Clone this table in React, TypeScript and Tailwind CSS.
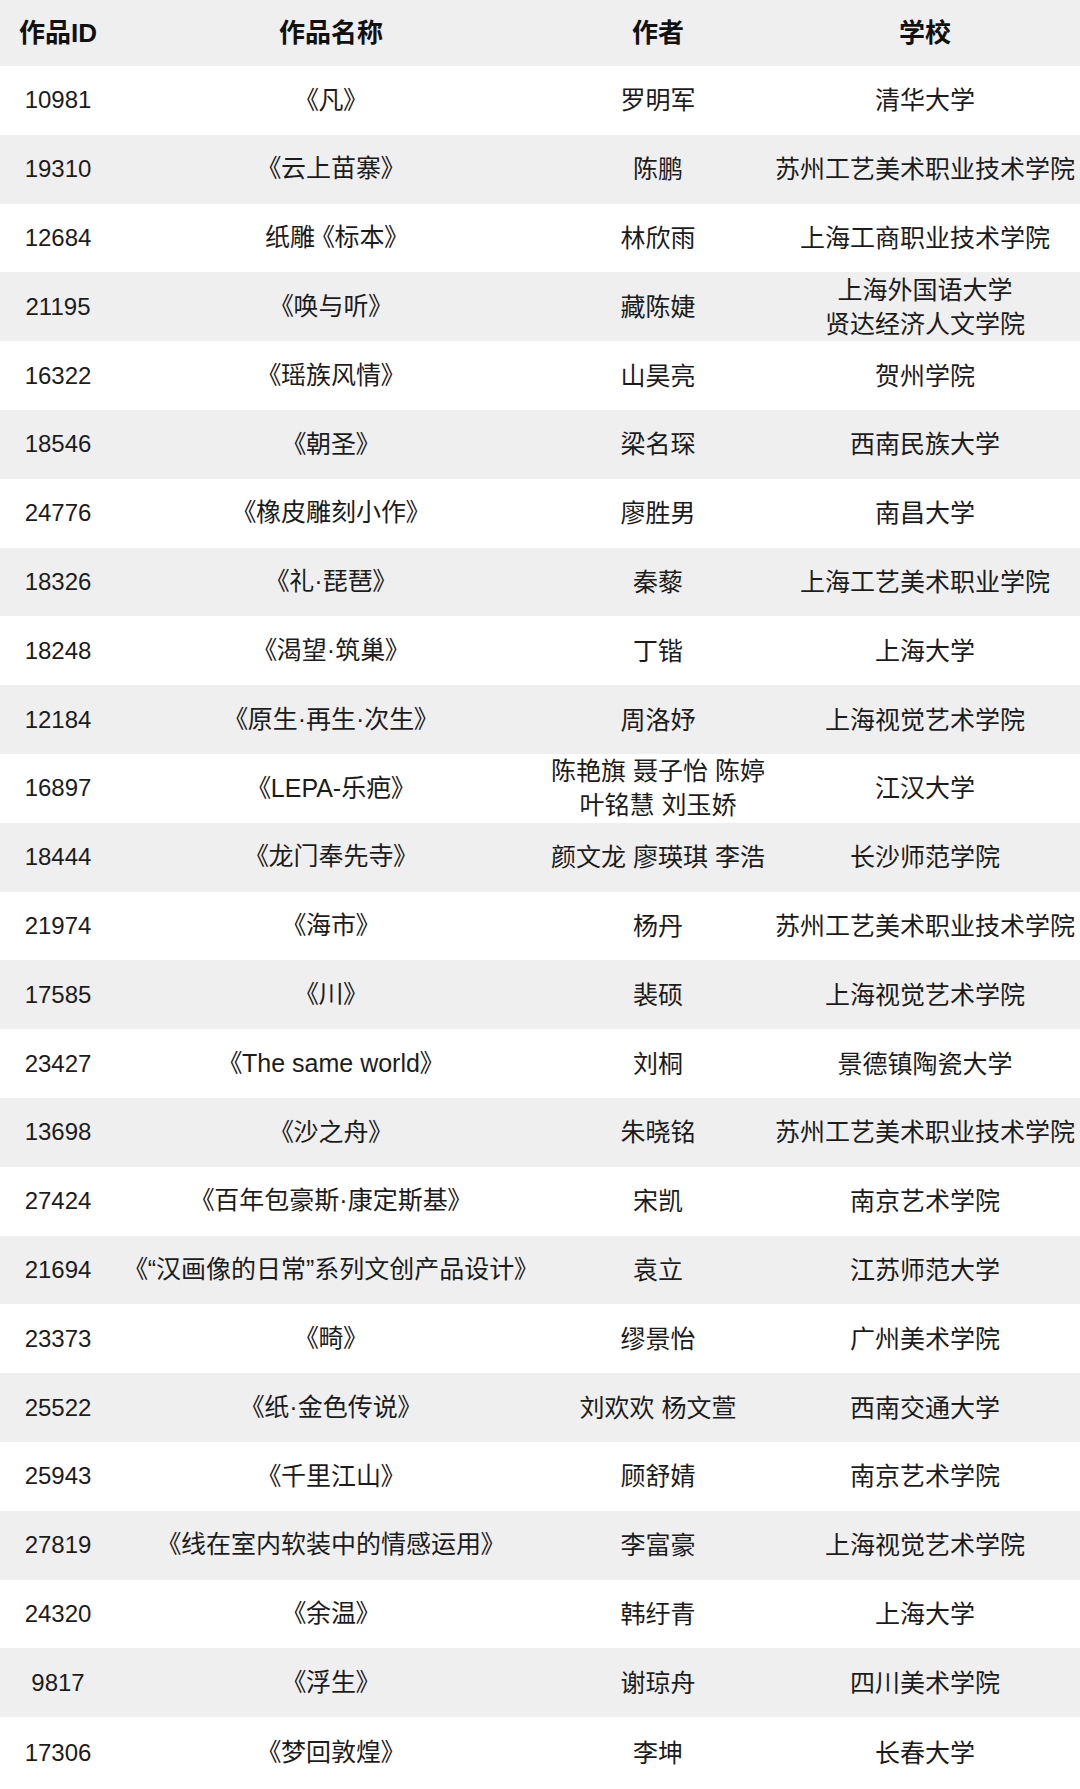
import React from "react"

type Row = {
  id: string
  title: string
  author: string[]
  school: string[]
}

const rows: Row[] = [
  { id: "10981", title: "《凡》", author: ["罗明军"], school: ["清华大学"] },
  { id: "19310", title: "《云上苗寨》", author: ["陈鹏"], school: ["苏州工艺美术职业技术学院"] },
  { id: "12684", title: "纸雕 《标本》", author: ["林欣雨"], school: ["上海工商职业技术学院"] },
  { id: "21195", title: "《唤与听》", author: ["藏陈婕"], school: ["上海外国语大学", "贤达经济人文学院"] },
  { id: "16322", title: "《瑶族风情》", author: ["山昊亮"], school: ["贺州学院"] },
  { id: "18546", title: "《朝圣》", author: ["梁名琛"], school: ["西南民族大学"] },
  { id: "24776", title: "《橡皮雕刻小作》", author: ["廖胜男"], school: ["南昌大学"] },
  { id: "18326", title: "《礼·琵琶》", author: ["秦藜"], school: ["上海工艺美术职业学院"] },
  { id: "18248", title: "《渴望·筑巢》", author: ["丁锴"], school: ["上海大学"] },
  { id: "12184", title: "《原生·再生·次生》", author: ["周洛妤"], school: ["上海视觉艺术学院"] },
  { id: "16897", title: "《LEPA-乐疤》", author: ["陈艳旗 聂子怡 陈婷", "叶铭慧 刘玉娇"], school: ["江汉大学"] },
  { id: "18444", title: "《龙门奉先寺》", author: ["颜文龙 廖瑛琪 李浩"], school: ["长沙师范学院"] },
  { id: "21974", title: "《海市》", author: ["杨丹"], school: ["苏州工艺美术职业技术学院"] },
  { id: "17585", title: "《川》", author: ["裴硕"], school: ["上海视觉艺术学院"] },
  { id: "23427", title: "《The same world》", author: ["刘桐"], school: ["景德镇陶瓷大学"] },
  { id: "13698", title: "《沙之舟》", author: ["朱晓铭"], school: ["苏州工艺美术职业技术学院"] },
  { id: "27424", title: "《百年包豪斯·康定斯基》", author: ["宋凯"], school: ["南京艺术学院"] },
  { id: "21694", title: "《“汉画像的日常”系列文创产品设计》", author: ["袁立"], school: ["江苏师范大学"] },
  { id: "23373", title: "《畸》", author: ["缪景怡"], school: ["广州美术学院"] },
  { id: "25522", title: "《纸·金色传说》", author: ["刘欢欢 杨文萱"], school: ["西南交通大学"] },
  { id: "25943", title: "《千里江山》", author: ["顾舒婧"], school: ["南京艺术学院"] },
  { id: "27819", title: "《线在室内软装中的情感运用》", author: ["李富豪"], school: ["上海视觉艺术学院"] },
  { id: "24320", title: "《余温》", author: ["韩纡青"], school: ["上海大学"] },
  { id: "9817", title: "《浮生》", author: ["谢琼舟"], school: ["四川美术学院"] },
  { id: "17306", title: "《梦回敦煌》", author: ["李坤"], school: ["长春大学"] },
]

const grid = "grid grid-cols-[116px_430px_224px_1fr] items-center"

const Lines = ({ lines }: { lines: string[] }) => (
  <div className="flex flex-col items-center leading-[34px] whitespace-nowrap">
    {lines.map((l) => (
      <span key={l}>{l}</span>
    ))}
  </div>
)

const App = () => {
  return (
    <div className="w-[1080px] h-[1789px] bg-white text-[#1c1c1c] font-['Liberation_Sans','Noto_Sans_CJK_SC',sans-serif] [font-feature-settings:'palt'] overflow-hidden">
      <div className={`${grid} h-[66px] bg-[#efefef] text-[26px] font-bold text-[#111]`}>
        <div className="flex justify-center">作品ID</div>
        <div className="flex justify-center">作品名称</div>
        <div className="flex justify-center">作者</div>
        <div className="flex justify-center">学校</div>
      </div>
      {rows.map((r, i) => (
        <div
          key={r.id}
          className={`${grid} text-[25px] ${i % 2 === 1 ? "bg-[#efefef]" : "bg-white"} ${
            i === rows.length - 1 ? "h-[71.8px]" : "h-[68.8px]"
          }`}
        >
          <div className="flex justify-center text-[24px]">{r.id}</div>
          <div className="flex justify-center whitespace-nowrap">{r.title}</div>
          <div className="flex justify-center">
            <Lines lines={r.author} />
          </div>
          <div className="flex justify-center">
            <Lines lines={r.school} />
          </div>
        </div>
      ))}
    </div>
  )
}

export default App
